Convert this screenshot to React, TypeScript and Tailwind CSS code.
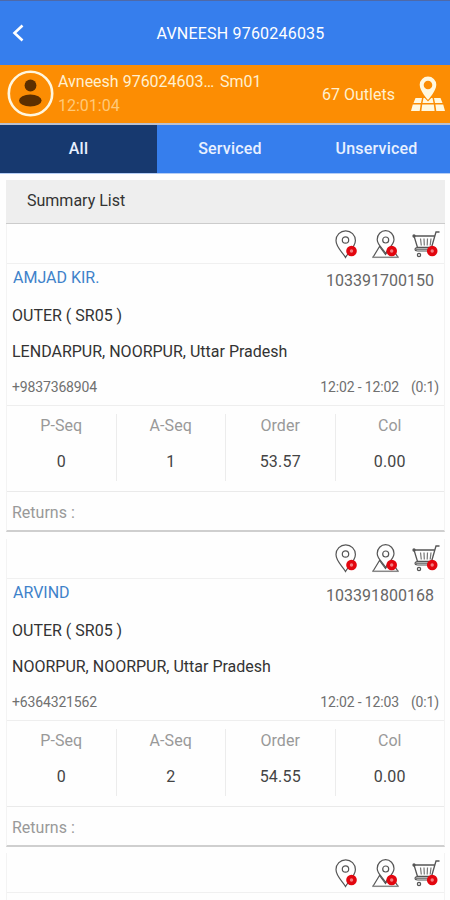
import { useState } from "react";
import clsx from "clsx";

interface Outlet {
  name: string;
  code: string;
  beat: string;
  address: string;
  phone: string;
  time: string;
  duration: string;
  stats: { label: string; value: string }[];
}

const outlets: Outlet[] = [
  {
    name: "AMJAD KIR.",
    code: "103391700150",
    beat: "OUTER ( SR05 )",
    address: "LENDARPUR, NOORPUR, Uttar Pradesh",
    phone: "+9837368904",
    time: "12:02 - 12:02",
    duration: "(0:1)",
    stats: [
      { label: "P-Seq", value: "0" },
      { label: "A-Seq", value: "1" },
      { label: "Order", value: "53.57" },
      { label: "Col", value: "0.00" },
    ],
  },
  {
    name: "ARVIND",
    code: "103391800168",
    beat: "OUTER ( SR05 )",
    address: "NOORPUR, NOORPUR, Uttar Pradesh",
    phone: "+6364321562",
    time: "12:02 - 12:03",
    duration: "(0:1)",
    stats: [
      { label: "P-Seq", value: "0" },
      { label: "A-Seq", value: "2" },
      { label: "Order", value: "54.55" },
      { label: "Col", value: "0.00" },
    ],
  },
];

const tabs = [
  { label: "All", className: "w-[157px]" },
  { label: "Serviced", className: "w-[146px]" },
  { label: "Unserviced", className: "w-[147px]" },
];

const StatusDot = ({ cx, cy }: { cx: number; cy: number }) => (
  <>
    <circle cx={cx} cy={cy} r="5.3" fill="#e2060f" stroke="none" />
    <circle cx={cx} cy={cy} r="1.7" fill="#f47c80" stroke="none" />
  </>
);

const PinIcon = () => (
  <svg width="30" height="30" viewBox="0 0 30 30" fill="none" stroke="#555" strokeWidth="1.2">
    <path d="M16.5 28.5C14 23.5 7 18.5 7 11.5a9.7 9.7 0 0 1 19.4 0c0 6.500-7 11.500-9.900 17z" />
    <circle cx="16.5" cy="11" r="3.2" />
    <StatusDot cx={22.5} cy={22} />
  </svg>
);

const PlaceIcon = () => (
  <svg width="30" height="30" viewBox="0 0 30 30" fill="none" stroke="#555" strokeWidth="1.2">
    <path d="M4 28.3 10.5 17.5 16.5 25.500 22 17.5 29 28.3" />
    <path
      d="M16.5 24.5C14.5 20 8.2 16 8.2 10.5a8.4 8.8 0 0 1 16.8 0C25 16 18.5 20 16.5 24.5z"
      fill="#fefefe"
    />
    <circle cx="16.7" cy="11" r="3" />
    <path d="M3.2 28.3h26.6" stroke="#888" strokeWidth="1.5" />
    <StatusDot cx={22.7} cy={22} />
  </svg>
);

const CartIcon = () => (
  <svg width="31" height="30" viewBox="0 0 31 30" fill="none" stroke="#555" strokeWidth="1.3">
    <path d="M30.5 3h-3.5l-4.5 15.5H8.5L5 7h20.500" />
    <path d="M11.5 9.5l.8 7M15 9.5l.3 7M18.5 9.5l-.3 7M22 9.5l-.8 7" stroke="#777" strokeWidth="1.2" />
    <path d="M8.5 18.5c-3.3.3-3.3 3.500 0 3.500H21M7 20.3h12" strokeWidth="1.1" />
    <circle cx="5" cy="7" r="1" fill="#555" />
    <circle cx="10" cy="26" r="1.6" />
    <StatusDot cx={23.2} cy={22} />
  </svg>
);

const MapIcon = () => (
  <svg width="34" height="36" viewBox="0 0 34 36" fill="#fff8e0">
    <path
      fillRule="evenodd"
      d="M17 .5a8.3 8.3 0 0 0-8.3 8.3C8.7 15 17 24 17 24s8.3-9 8.3-15.2A8.3 8.3 0 0 0 17 .5zm0 4.2a4.3 4.3 0 1 1 0 8.6 4.3 4.3 0 0 1 0-8.6z"
    />
    <path d="M4.500 22H11l-1 5H2.500zM23 22h6.500l2 5H24zM12.500 22h1.200l3.300 3.500 3.300-3.500h1.200l1 5h-11zM1.800 28.500h7.800L8.700 35H0zM24.400 28.500h7.800L34 35h-8.700zM11.200 28.500h11.600l.8 6.500H10.400z" />
  </svg>
);

const StatusIcons = () => (
  <div className="flex h-10 shrink-0 items-center justify-end gap-[10px] border-b border-[#f0f0f0] pr-1">
    <PinIcon />
    <PlaceIcon />
    <CartIcon />
  </div>
);

const OutletCard = ({ outlet }: { outlet: Outlet }) => (
  <div className="mb-[6.5px] h-[308px] border-x border-b-2 border-x-[#f3f3f3] border-b-[#cfcfcf]">
    <StatusIcons />
    <div className="flex h-[142px] flex-col border-b border-[#eee] px-[5px] text-[#333]">
      <div className="flex h-[33px] justify-between pr-[5px] pl-px">
        <span className="pt-[2px] text-[16px] leading-6 text-[#3e82ca]">{outlet.name}</span>
        <span className="pt-[5px] text-[16px] leading-6 text-[#666]">{outlet.code}</span>
      </div>
      <p className="h-[38px] pt-[7px] text-[16px] leading-6">{outlet.beat}</p>
      <p className="h-[36px] pt-[5px] text-[16px] leading-6">{outlet.address}</p>
      <div className="flex justify-between pt-[6px] text-[14px] leading-5 tracking-[-0.15px] text-[#707070]">
        <span>{outlet.phone}</span>
        <span className="flex gap-3">
          <span>{outlet.time}</span>
          <span>{outlet.duration}</span>
        </span>
      </div>
    </div>
    <div className="flex h-[86px] border-b border-[#eaeaea] pt-2 pb-[10px]">
      {outlet.stats.map((stat, index) => (
        <div
          key={stat.label}
          className={clsx(
            "flex flex-1 flex-col items-center text-[16px] leading-6",
            index > 0 && "border-l border-[#ececec]"
          )}
        >
          <span className="h-9 tracking-[0.1px] text-[#999]">{stat.label}</span>
          <span className="tracking-[0.2px] text-[#444]">{stat.value}</span>
        </div>
      ))}
    </div>
    <div className="pt-[9px] pl-[5px] text-[16px] leading-6 text-[#999]">Returns :</div>
  </div>
);

export default function App() {
  const [activeTab, setActiveTab] = useState("All");

  return (
    <div className="flex h-[900px] w-[450px] flex-col overflow-hidden bg-[#fefefe] font-['Roboto',sans-serif]">
      <header className="flex h-[65px] shrink-0 items-center border-t border-[#4e69a8] bg-[#367eed] text-white">
        <button className="flex w-[30px] justify-end pr-[6px]" aria-label="Back">
          <svg width="12" height="18" viewBox="0 0 12 18" fill="none" stroke="currentColor" strokeWidth="2.6">
            <path d="M10.5 1.5 2.500 9l8 7.500" />
          </svg>
        </button>
        <h1 className="flex-1 pt-px pl-px text-center text-[16px] tracking-[0.2px]">AVNEESH 9760246035</h1>
      </header>

      <section className="flex h-[60px] shrink-0 border-b-2 border-[#bcc0cd] bg-[#fc8d03] text-[16px] leading-6 text-[#fff0d0]">
        <div className="flex w-[58px] items-center pb-px pl-[7px]">
          <svg width="47" height="47" viewBox="0 0 47 47">
            <circle cx="23.5" cy="23.5" r="21.7" fill="none" stroke="#fff6de" strokeWidth="2.6" />
            <circle cx="23.5" cy="15.5" r="5.9" fill="#5c2f00" />
            <ellipse cx="23.3" cy="30.5" rx="11.3" ry="6" fill="#5c2f00" />
          </svg>
        </div>
        <div className="w-[264px] pt-[5px]">
          <p className="flex gap-[6px]">
            <span className="w-[156px] whitespace-nowrap">Avneesh 976024603…</span>
            <span>Sm01</span>
          </p>
          <p className="text-[#ffc978]">12:01:04</p>
        </div>
        <span className="w-[89px] pt-[18px]">67 Outlets</span>
        <div className="pt-[11px]">
          <MapIcon />
        </div>
      </section>

      <nav className="flex h-[49px] shrink-0 border-b border-[#b4cdf5] bg-[#367eed]">
        {tabs.map((tab) => (
          <button
            key={tab.label}
            onClick={() => setActiveTab(tab.label)}
            className={clsx(
              "text-[16px] font-medium tracking-[0.2px] text-[#e8f0ff]",
              tab.className,
              activeTab === tab.label && "bg-[#17396f]"
            )}
          >
            {tab.label}
          </button>
        ))}
      </nav>

      <main className="pt-[6px] pr-[5px] pl-[6px]">
        <h2 className="h-11 border-b border-[#ccc] bg-[#eee] pt-[9px] pl-[21px] text-[16px] leading-6 text-[#333]">
          Summary List
        </h2>
        {outlets.map((outlet) => (
          <OutletCard key={outlet.code} outlet={outlet} />
        ))}
        <div className="h-[60px] border-x border-[#f3f3f3]">
          <StatusIcons />
        </div>
      </main>
    </div>
  );
}
